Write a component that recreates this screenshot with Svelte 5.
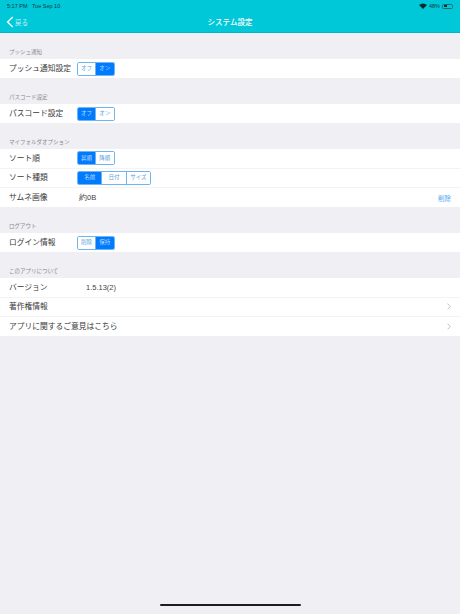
<script>
  const sections = [
    {
      title: 'プッシュ通知',
      rows: [{ label: 'プッシュ通知設定', options: ['オフ', 'オン'], active: 1 }]
    },
    {
      title: 'パスコード設定',
      rows: [{ label: 'パスコード設定', options: ['オフ', 'オン'], active: 0 }]
    },
    {
      title: 'マイフォルダオプション',
      rows: [
        { label: 'ソート順', options: ['昇順', '降順'], active: 0 },
        { label: 'ソート種類', options: ['名前', '日付', 'サイズ'], active: 0 },
        { label: 'サムネ画像', value: '約0B', action: '削除' }
      ]
    },
    {
      title: 'ログアウト',
      rows: [{ label: 'ログイン情報', options: ['削除', '保持'], active: 1 }]
    },
    {
      title: 'このアプリについて',
      rows: [
        { label: 'バージョン', value: '1.5.13(2)', wide: true },
        { label: '著作権情報', link: true },
        { label: 'アプリに関するご意見はこちら', link: true }
      ]
    }
  ];
</script>

<div class="page">
  <header class="header">
    <div class="status">
      <span>5:17 PM&nbsp;&nbsp; Tue Sep 10</span>
      <div class="status-right">
        <svg width="8" height="6" viewBox="0 0 8 6">
          <path d="M0 2a6 6 0 0 1 8 0L4 6z" fill="#0a2a30" />
        </svg>
        <span>48%</span>
        <div class="battery"><div class="battery-level"></div></div>
      </div>
    </div>
    <div class="nav">
      <div class="back">
        <svg width="8" height="12" viewBox="0 0 8 12">
          <path d="M6.8 1 1.6 6l5.2 5" fill="none" stroke="#e8fbff" stroke-width="1.5" />
        </svg>
        <span>戻る</span>
      </div>
      <div class="title">システム設定</div>
    </div>
  </header>

  {#each sections as section}
    <section class="section">
      <div class="section-title">{section.title}</div>
      <div class="rows">
        {#each section.rows as row}
          <div class="row">
            <span class="label">{row.label}</span>
            {#if row.options}
              <div class="segment" class:triple={row.options.length === 3}>
                {#each row.options as option, i}
                  <span class="option" class:active={i === row.active}>{option}</span>
                {/each}
              </div>
            {/if}
            {#if row.value}
              <span class="value" class:wide={row.wide}>{row.value}</span>
            {/if}
            {#if row.action}
              <span class="action">{row.action}</span>
            {/if}
            {#if row.link}
              <svg class="chevron" width="4" height="7" viewBox="0 0 4 7">
                <path d="M.6.6 3.3 3.5.6 6.4" fill="none" stroke="#b5b5ba" stroke-width="0.8" />
              </svg>
            {/if}
          </div>
        {/each}
      </div>
    </section>
  {/each}

  <div class="home-wrap"><div class="home-bar"></div></div>
</div>

<style>
  :global(body) {
    margin: 0;
  }

  .page {
    height: 614px;
    background: #efeff4;
    display: flex;
    flex-direction: column;
    font-family: "Noto Sans CJK JP", "Liberation Sans", sans-serif;
    color: #333;
    overflow: hidden;
  }

  .header {
    height: 33px;
    flex: none;
    background: #00c8d8;
    border-bottom: 1px solid #00b6c6;
    box-sizing: border-box;
    padding: 2px 7px 0;
  }

  .status {
    height: 8px;
    display: flex;
    justify-content: space-between;
    align-items: center;
    font-family: "Liberation Sans", sans-serif;
    font-size: 5.5px;
    color: #0a3a40;
  }

  .status-right {
    display: flex;
    align-items: center;
    gap: 2px;
  }

  .battery {
    width: 11px;
    height: 5px;
    box-sizing: border-box;
    border: 0.5px solid #2a6a72;
    border-radius: 1.5px;
    padding: 0.5px;
  }

  .battery-level {
    width: 48%;
    height: 100%;
    background: #0a2a30;
  }

  .nav {
    position: relative;
    height: 22px;
    display: flex;
    align-items: center;
    justify-content: center;
  }

  .back {
    position: absolute;
    left: -1px;
    top: 6px;
    display: flex;
    align-items: center;
    gap: 1px;
    font-size: 6.5px;
    color: #c8f4f8;
  }

  .title {
    font-size: 7.5px;
    font-weight: 500;
    color: #fff;
  }

  .section-title {
    height: 26px;
    box-sizing: border-box;
    padding: 14.5px 0 0 9px;
    font-size: 5.5px;
    line-height: 8px;
    color: #8a8a8f;
  }

  .rows {
    background: #fff;
  }

  .row {
    height: 19.5px;
    box-sizing: border-box;
    padding: 0 9px;
    display: flex;
    align-items: center;
    border-bottom: 1px solid #f3f3f6;
    font-size: 7.75px;
  }

  .row:last-child {
    height: 19px;
    border-bottom: none;
  }

  .label {
    width: 68px;
    flex: none;
    padding-bottom: 2px;
    white-space: nowrap;
    color: #3a3a3c;
  }

  .label:has(+ .chevron) {
    width: auto;
  }

  .segment {
    display: flex;
    border: 0.5px solid #6fb5f0;
    border-radius: 2px;
    overflow: hidden;
    height: 14px;
    width: 37.5px;
    box-sizing: border-box;
  }

  .segment.triple {
    width: 74px;
  }

  .option {
    flex: 1;
    display: flex;
    align-items: center;
    justify-content: center;
    padding-bottom: 1px;
    box-sizing: border-box;
    font-size: 5.5px;
    color: #5a9fd8;
    background: #fff;
    border-left: 0.5px solid #6fb5f0;
  }

  .option:first-child {
    border-left: none;
  }

  .option.active {
    background: #007aff;
    color: #bcdcff;
  }

  .value {
    margin-left: 2px;
    font-family: "Liberation Sans", sans-serif;
    font-size: 7.5px;
    color: #444;
  }

  .value.wide {
    margin-left: 9px;
  }

  .action {
    margin-left: auto;
    font-size: 6.5px;
    color: #4da6f0;
  }

  .chevron {
    margin-left: auto;
  }

  .home-wrap {
    margin-top: auto;
    height: 14px;
    flex: none;
    display: flex;
    justify-content: center;
  }

  .home-bar {
    width: 141px;
    height: 2px;
    margin-top: 4px;
    border-radius: 1px;
    background: #1c1c22;
  }
</style>
